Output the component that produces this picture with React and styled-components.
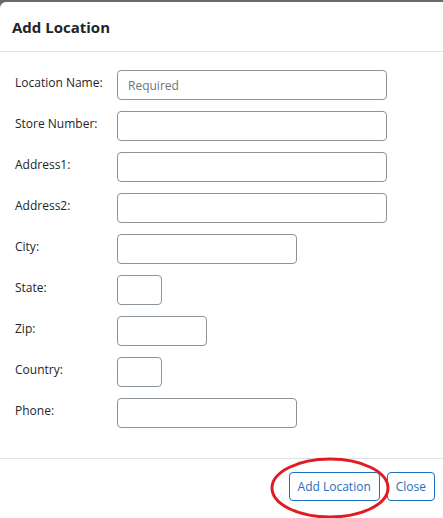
import React from 'react';
import styled, { createGlobalStyle } from 'styled-components';

const GlobalStyle = createGlobalStyle`
  html, body {
    margin: 0;
    height: 100%;
    background: #6a6a6a;
    font-family: "Open Sans", "Noto Sans", sans-serif;
  }
  #root {
    height: 100%;
  }
`;

const Modal = styled.div`
  margin-top: 2px;
  height: calc(100% - 2px);
  background: #fff;
  border-top-left-radius: 6px;
  display: flex;
  flex-direction: column;
  overflow: hidden;
`;

const Header = styled.div`
  display: flex;
  align-items: center;
  height: 49px;
  padding: 0 12px;
  border-bottom: 1px solid #dee2e6;

  h5 {
    margin: 0;
    font-size: 15px;
    font-weight: 700;
    color: #212529;
  }
`;

const Body = styled.div`
  flex: 1;
  padding: 18px 15px 0;
`;

const Row = styled.div`
  display: grid;
  grid-template-columns: 102px 1fr;
  align-items: start;
  margin-bottom: 11px;
`;

const Label = styled.label`
  font-size: 12px;
  line-height: 18px;
  padding-top: 4px;
  color: #212529;
`;

const Input = styled.input`
  box-sizing: border-box;
  width: ${({ $w }) => $w}px;
  height: 30px;
  padding: 0 10px;
  border: 1px solid #8c929a;
  border-radius: 4px;
  font-family: inherit;
  font-size: 12px;
  color: #212529;
  background: #fff;
  outline: none;

  &::placeholder {
    color: #6c757d;
  }
`;

const Footer = styled.div`
  position: relative;
  display: flex;
  justify-content: flex-end;
  gap: 7px;
  height: 60px;
  box-sizing: border-box;
  padding: 13px 8px 0;
  border-top: 1px solid #dee2e6;
`;

const Button = styled.button`
  height: 29px;
  padding: 0 8px;
  background: #fff;
  border: 1px solid #1a6fc0;
  border-radius: 4px;
  color: #1a6fc0;
  font-family: inherit;
  font-size: 12px;
  cursor: pointer;
`;

const Mark = styled.svg`
  position: absolute;
  left: 270px;
  top: -2px;
  pointer-events: none;
`;

const fields = [
  { label: 'Location Name:', w: 270, placeholder: 'Required' },
  { label: 'Store Number:', w: 270 },
  { label: 'Address1:', w: 270 },
  { label: 'Address2:', w: 270 },
  { label: 'City:', w: 180 },
  { label: 'State:', w: 45 },
  { label: 'Zip:', w: 90 },
  { label: 'Country:', w: 45 },
  { label: 'Phone:', w: 180 },
];

export default function App() {
  return (
    <>
      <GlobalStyle />
      <Modal>
        <Header>
          <h5>Add Location</h5>
        </Header>
        <Body>
          {fields.map((f) => (
            <Row key={f.label}>
              <Label>{f.label}</Label>
              <Input $w={f.w} placeholder={f.placeholder} />
            </Row>
          ))}
        </Body>
        <Footer>
          <Button type="button">Add Location</Button>
          <Button type="button">Close</Button>
          <Mark width="122" height="64" viewBox="0 0 122 64">
            <ellipse cx="60" cy="31" rx="58" ry="29" fill="none" stroke="#e01b22" strokeWidth="3" />
          </Mark>
        </Footer>
      </Modal>
    </>
  );
}
